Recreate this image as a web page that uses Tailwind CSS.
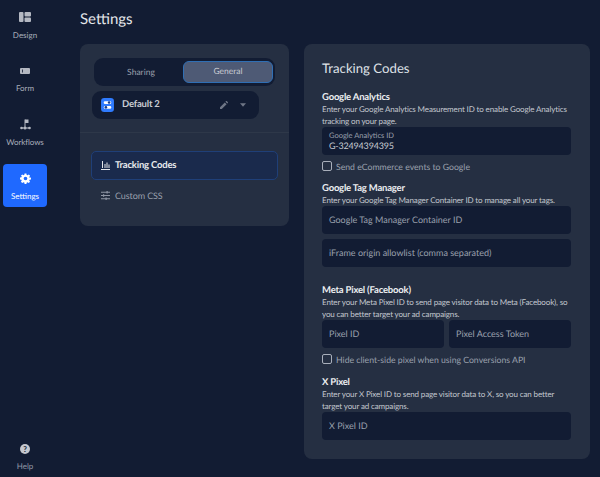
<!DOCTYPE html>
<html lang="en">
<head>
  <meta charset="UTF-8">
  <title>Settings</title>
  <script src="https://cdn.jsdelivr.net/npm/@tailwindcss/browser@4"></script>
</head>
<body class="bg-[#121c33] font-['Lato','Inter',sans-serif] overflow-hidden antialiased [text-rendering:geometricPrecision]">
  <div class="flex h-[477px] w-[600px]">
    <!-- sidebar -->
    <nav class="w-[44px] ml-[3px] mr-[33px] shrink-0 flex flex-col text-[8px] text-[#a9afbb]">
      <a class="h-[57px] mt-[11px] flex flex-col items-center gap-[7px]">
        <svg class="w-[12px] h-[12px] shrink-0" viewBox="0 0 12 12" fill="#b4b8c2"><rect x="0" y="1" width="4.5" height="10" rx="1"/><rect x="5.5" y="1" width="6.5" height="4.5" rx="1"/><rect x="5.5" y="6.5" width="6.5" height="4.5" rx="1"/></svg>
        <span class="leading-[11px]">Design</span>
      </a>
      <a class="h-[51px] flex flex-col items-center gap-[8.5px]">
        <svg class="w-[10px] h-[6px] shrink-0" viewBox="0 0 10 6" fill="#b4b8c2"><path fill-rule="evenodd" d="M1 0h8a1 1 0 0 1 1 1v4a1 1 0 0 1-1 1H1a1 1 0 0 1-1-1V1a1 1 0 0 1 1-1zm1.2 1.5v3h.8v-3z"/></svg>
        <span class="leading-[11px]">Form</span>
      </a>
      <a class="h-[45px] flex flex-col items-center gap-[6.5px]">
        <svg class="w-[11px] h-[11px] shrink-0" viewBox="0 0 11 11" fill="none"><path d="M5 0.5v8" stroke="#b4b8c2"/><path d="M5 0.5h3.5v3.5H5z" fill="#b4b8c2"/><path d="M1 9h9" stroke="#b4b8c2"/><circle cx="1.5" cy="9" r="1.3" fill="#b4b8c2"/><circle cx="5" cy="9" r="1.5" fill="#b4b8c2"/><circle cx="9.5" cy="9" r="1.3" fill="#b4b8c2"/></svg>
        <span class="leading-[11px] tracking-[-0.1px]">Workflows</span>
      </a>
      <a class="h-[43px] w-[44px] bg-[#1f69ff] rounded-[4px] text-white flex flex-col items-center pt-[8.5px] gap-[7px]">
        <svg class="w-[11px] h-[11px] shrink-0" viewBox="0 0 24 24" fill="#fff"><path fill-rule="evenodd" d="M10 1h4l.6 3.1 1.9.8 2.7-1.8 2.8 2.8-1.8 2.7.8 1.9L24 10v4l-3.1.6-.8 1.9 1.8 2.7-2.8 2.8-2.7-1.8-1.9.8L14 24h-4l-.6-3.1-1.9-.8-2.7 1.8L2 19.1l1.8-2.7-.8-1.9L0 14v-4l3.1-.6.8-1.9L2.1 5.8 4.9 3l2.7 1.8 1.9-.8zM12 8a4 4 0 1 0 0 8 4 4 0 0 0 0-8z"/></svg>
        <span class="leading-[11px]">Settings</span>
      </a>
      <a class="mt-auto mb-[5px] flex flex-col items-center gap-[7px] text-[#8f96a5]">
        <span class="w-[10px] h-[10px] rounded-full bg-[#c5c8cf] text-[#121c33] text-[8px] font-bold leading-[10px] text-center">?</span>
        <span class="leading-[11px]">Help</span>
      </a>
    </nav>

    <main class="flex-1 min-w-0">
      <h1 class="text-[15px] leading-[20px] mt-[9px] text-[#e4e6ea]">Settings</h1>
      <div class="mt-[15px] flex items-start">
        <!-- left card -->
        <section class="w-[209px] h-[182px] bg-[#252f42] rounded-[8px] shrink-0 pt-[14px]">
          <div class="ml-[14px] w-[181px] h-[28px] bg-[#121c33] rounded-[9px] flex items-center pl-[3px] text-[8.5px]">
            <span class="w-[86px] pl-[2px] text-center text-[#9aa0ad]">Sharing</span>
            <span class="w-[90px] h-[22px] leading-[19px] text-center text-[#c9ccd3] bg-[#4e5a75] border-[1.5px] border-[#2f6fb5] rounded-[6px]">General</span>
          </div>
          <div class="ml-[12px] mt-[5px] w-[167px] h-[28px] bg-[#121c33] rounded-[9px] flex items-center pl-[9px] pr-[13px]">
            <svg class="w-[13px] h-[14px]" viewBox="0 0 12 13"><rect width="12" height="13" rx="3" fill="#2f7bff"/><rect x="2.5" y="3" width="7" height="2.5" rx="1.2" fill="#fff"/><rect x="2.5" y="7.5" width="7" height="2.5" rx="1.2" fill="#fff"/><circle cx="7.5" cy="4.2" r="1.2" fill="#1a3d8a"/><circle cx="4.5" cy="8.7" r="1.2" fill="#1a3d8a"/></svg>
            <span class="ml-[8px] pt-[1px] text-[9.5px] tracking-[-0.2px] font-bold text-[#c9ccd3]">Default 2</span>
            <svg class="w-[8px] h-[8px] ml-auto" viewBox="0 0 8 8" fill="#6f7686"><path d="M0 8V6.2L4.8 1.4 6.6 3.2 1.8 8zM5.4.8 6.1.1a.5.5 0 0 1 .7 0l1.1 1.1a.5.5 0 0 1 0 .7l-.7.7z"/></svg>
            <svg class="w-[6px] h-[4px] ml-[12px]" viewBox="0 0 7 4" fill="#6f7686"><path d="M0 0h7L3.5 4z"/></svg>
          </div>
          <div class="mt-[13px] h-px bg-[#2e3849]"></div>
          <div class="ml-[11px] mt-[18px] w-[187px] h-[29px] bg-[#1a2a4c] border border-[#1f3f78] rounded-[5px] flex items-center pl-[9px] gap-[5px]">
            <svg class="w-[9px] h-[9px]" viewBox="0 0 9 9" fill="#e6e8ec"><path d="M1 0h1v7H1zM3.5 3h1v4h-1zM5.5 1.5h1V7h-1zM7.5 3.5h1V7h-1zM0 8h9v1H0z"/></svg>
            <span class="pt-[2px] text-[9.5px] tracking-[-0.2px] font-bold text-[#e8eaee]">Tracking Codes</span>
          </div>
          <div class="ml-[11px] mt-[2px] h-[27px] flex items-center pl-[10px] gap-[5px]">
            <svg class="w-[9px] h-[9px]" viewBox="0 0 9 9" fill="#8f96a5"><path d="M0 .8h9v1H0zM0 4h9v1H0zM0 7.2h9v1H0z"/><path d="M5.5 0h1.2v2.600H5.500zM2 3.200h1.200v2.600H2zM4.500 6.400h1.200V9H4.500z"/></svg>
            <span class="pt-[1px] text-[9px] tracking-[-0.1px] text-[#9aa0ad]">Custom CSS</span>
          </div>
        </section>

        <!-- right card -->
        <section class="ml-[15px] w-[286px] h-[415px] bg-[#252f42] rounded-[8px] pl-[18px] pr-[19px] pt-[15px]">
          <h2 class="text-[13.2px] leading-[18px] text-[#dfe2e7]">Tracking Codes</h2>

          <h3 class="mt-[14.5px] text-[9.5px] tracking-[-0.2px] leading-[11px] font-bold text-[#eceef1]">Google Analytics</h3>
          <p class="text-[8px] tracking-[-0.13px] leading-[12px] text-[#c3c7cf]">Enter your Google Analytics Measurement ID to enable Google Analytics tracking on your page.</p>
          <div class="mt-[0.5px] h-[28px] bg-[#121c33] rounded-[4px] pl-[7px] pt-[3px]">
            <div class="text-[7.5px] leading-[11px] text-[#9aa0ad]">Google Analytics ID</div>
            <div class="text-[9px] tracking-[-0.2px] leading-[10px] text-[#c9ccd3]">G-32494394395</div>
          </div>
          <label class="mt-[5.5px] h-[11px] flex items-center gap-[4px]">
            <span class="w-[10px] h-[10px] rounded-[2px] border border-[#a9afbb]"></span>
            <span class="pt-[1px] text-[8.7px] text-[#9aa0ad]">Send eCommerce events to Google</span>
          </label>

          <h3 class="mt-[11px] text-[9.5px] tracking-[-0.2px] leading-[11px] font-bold text-[#eceef1]">Google Tag Manager</h3>
          <p class="text-[8px] tracking-[-0.13px] leading-[12px] text-[#c3c7cf]">Enter your Google Tag Manager Container ID to manage all your tags.</p>
          <div class="mt-[0.5px] h-[28px] bg-[#121c33] rounded-[4px] px-[7px] flex items-center text-[9px] text-[#9aa0ad]">Google Tag Manager Container ID</div>
          <div class="mt-[5px] h-[28px] bg-[#121c33] rounded-[4px] px-[7px] flex items-center text-[9px] text-[#9aa0ad]">iFrame origin allowlist (comma separated)</div>

          <h3 class="mt-[17.5px] text-[9.5px] tracking-[-0.2px] leading-[11px] font-bold text-[#eceef1]">Meta Pixel (Facebook)</h3>
          <p class="text-[8px] tracking-[-0.13px] leading-[12px] text-[#c3c7cf]">Enter your Meta Pixel ID to send page visitor data to Meta (Facebook), so you can better target your ad campaigns.</p>
          <div class="mt-[0.5px] flex gap-[5px]">
            <div class="flex-1 h-[28px] bg-[#121c33] rounded-[4px] px-[7px] flex items-center text-[9px] text-[#9aa0ad]">Pixel ID</div>
            <div class="flex-1 h-[28px] bg-[#121c33] rounded-[4px] px-[7px] flex items-center text-[9px] text-[#9aa0ad]">Pixel Access Token</div>
          </div>
          <label class="mt-[5.5px] h-[11px] flex items-center gap-[4px]">
            <span class="w-[10px] h-[10px] rounded-[2px] border border-[#a9afbb]"></span>
            <span class="pt-[1px] text-[8.7px] text-[#9aa0ad]">Hide client-side pixel when using Conversions API</span>
          </label>

          <h3 class="mt-[12px] text-[9.5px] tracking-[-0.2px] leading-[11px] font-bold text-[#eceef1]">X Pixel</h3>
          <p class="text-[8px] tracking-[-0.13px] leading-[12px] text-[#c3c7cf]">Enter your X Pixel ID to send page visitor data to X, so you can better target your ad campaigns.</p>
          <div class="mt-[0.5px] h-[28px] bg-[#121c33] rounded-[4px] px-[7px] flex items-center text-[9px] text-[#9aa0ad]">X Pixel ID</div>
        </section>
      </div>
    </main>
  </div>
</body>
</html>
